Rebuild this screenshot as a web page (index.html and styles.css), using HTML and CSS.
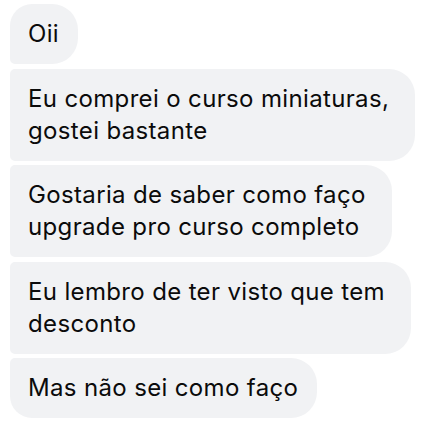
FILE: index.html
```html
<!DOCTYPE html>
<html lang="pt">
<head>
<meta charset="utf-8">
<link rel="stylesheet" href="styles.css">
</head>
<body>
<div class="chat">
  <div class="bubble first">Oii</div>
  <div class="bubble multi">Eu comprei o curso miniaturas,<br>gostei bastante</div>
  <div class="bubble multi">Gostaria de saber como faço<br>upgrade pro curso completo</div>
  <div class="bubble multi">Eu lembro de ter visto que tem<br>desconto</div>
  <div class="bubble last">Mas não sei como faço</div>
</div>
</body>
</html>
```

FILE: styles.css
```css
html, body {
  margin: 0;
  padding: 0;
  background: #ffffff;
}
.chat {
  display: flex;
  flex-direction: column;
  align-items: flex-start;
  gap: 4.5px;
  padding: 4px 0 0 10px;
}
.bubble {
  background: #f1f2f4;
  color: #0b0b0b;
  font-family: Inter, "Noto Sans", sans-serif;
  font-size: 24px;
  letter-spacing: 0.35px;
  line-height: 32px;
  padding: 14px 19px 14px 18px;
  white-space: nowrap;
  border-radius: 5px 26px 26px 5px;
}
.bubble.multi {
  padding-right: 26px;
}
.bubble.first {
  border-radius: 22px 26px 26px 5px;
}
.bubble.last {
  border-radius: 5px 26px 26px 22px;
}
```
